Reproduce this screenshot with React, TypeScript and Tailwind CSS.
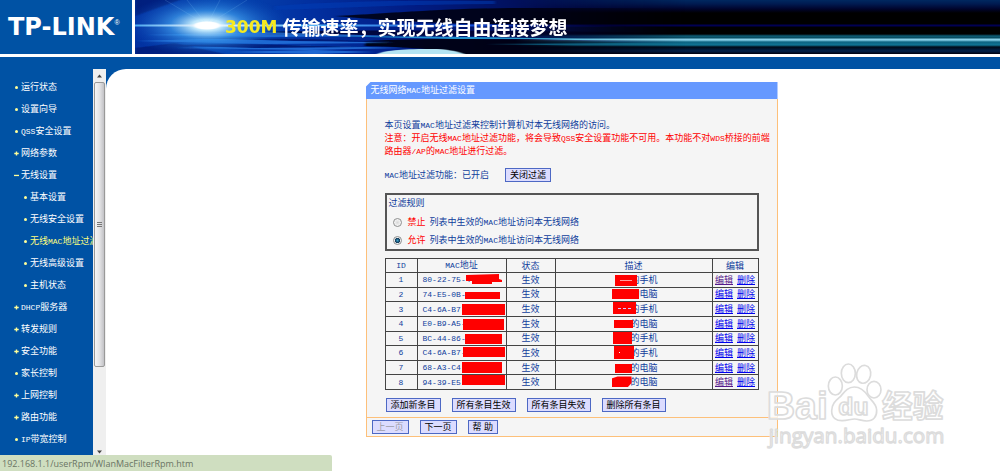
import React from "react";

const cjk =
  "font-['Liberation_Sans','Noto_Sans_CJK_SC',sans-serif] text-[9px] leading-[13px]";

/** Sets runs of Latin letters and digits in the half-width monospace face. */
function T({ children }: { children: string }) {
  const parts = children.split(/([A-Za-z0-9/\-]+)/);
  return (
    <>
      {parts.map((part, i) =>
        i % 2 === 1 ? (
          <span key={i} className="font-['Liberation_Mono',monospace] text-[8px]">
            {part}
          </span>
        ) : (
          part
        ),
      )}
    </>
  );
}

type Mark = "dot" | "plus" | "minus";

const navItems: { label: string; mark: Mark; sub?: boolean; active?: boolean }[] = [
  { label: "运行状态", mark: "dot" },
  { label: "设置向导", mark: "dot" },
  { label: "QSS安全设置", mark: "dot" },
  { label: "网络参数", mark: "plus" },
  { label: "无线设置", mark: "minus" },
  { label: "基本设置", mark: "dot", sub: true },
  { label: "无线安全设置", mark: "dot", sub: true },
  { label: "无线MAC地址过滤", mark: "dot", sub: true, active: true },
  { label: "无线高级设置", mark: "dot", sub: true },
  { label: "主机状态", mark: "dot", sub: true },
  { label: "DHCP服务器", mark: "plus" },
  { label: "转发规则", mark: "plus" },
  { label: "安全功能", mark: "plus" },
  { label: "家长控制", mark: "dot" },
  { label: "上网控制", mark: "plus" },
  { label: "路由功能", mark: "plus" },
  { label: "IP带宽控制", mark: "dot" },
];

function NavMark({ mark }: { mark: Mark }) {
  return (
    <svg viewBox="0 0 5 5" className="size-[5px] shrink-0" fill="#ffff99" aria-hidden="true">
      {mark === "dot" && <circle cx="2.5" cy="2.5" r="1.5" />}
      {mark === "plus" && <path d="M1.8 0.5h1.4v1.3h1.5v1.4h-1.5v1.3h-1.4v-1.3h-1.5v-1.4h1.5z" />}
      {mark === "minus" && <rect x="0" y="1.8" width="5" height="1.3" />}
    </svg>
  );
}

function Header() {
  return (
    <header className="flex h-[54px] shrink-0 gap-[3px] bg-white">
      <div className="flex w-[132px] shrink-0 bg-[#0052a4] pl-[8px] text-white">
        <span className="pt-[15px] font-['DejaVu_Sans',sans-serif] text-[24px] leading-[25px] font-bold">TP-LINK</span>
        <span className="pt-[19px] font-['Liberation_Sans',sans-serif] text-[7px] leading-none">®</span>
      </div>
      <div className="relative flex min-w-0 flex-1 items-center overflow-hidden bg-[linear-gradient(180deg,#002860_0px,#001a50_4px,#00042c_9px,#000_13px,#000_24px,#000052_25px,#000052_26px,#000_27px,#000_34px,#0d5e78_36px,#07485c_38px,#86cfe8_39px,#86cfe8_40px,#0d6482_42px,#0f7494_45px,#000a18_47px,#00204a_51px,#00000c_54px)]">
        <Flare />
        <div className="relative flex items-center gap-[5px] pl-[90px] whitespace-nowrap">
          <span className="font-['DejaVu_Sans',sans-serif] text-[17px] leading-[54px] font-bold text-[#f6ea1e]">300M</span>
          <span className="font-['Noto_Sans_CJK_SC',sans-serif] text-[19px] leading-[54px] font-bold text-white">
            传输速率，实现无线自由连接梦想
          </span>
        </div>
      </div>
    </header>
  );
}

function Flare() {
  return (
    <svg
      viewBox="0 0 865 54"
      className="absolute top-0 left-0 h-[54px] w-[865px] [mask-image:linear-gradient(90deg,#000_380px,transparent_550px)]"
      aria-hidden="true"
    >
      <defs>
        <linearGradient id="base" x1="0" x2="1" y1="0" y2="0">
          <stop offset="0" stopColor="#0230a0" />
          <stop offset="0.1" stopColor="#0546b0" />
          <stop offset="0.2" stopColor="#0230a0" />
          <stop offset="0.32" stopColor="#011c84" />
          <stop offset="0.48" stopColor="#010c50" />
          <stop offset="0.62" stopColor="#000430" />
        </linearGradient>
        <radialGradient id="halo">
          <stop offset="0" stopColor="#fff" />
          <stop offset="0.18" stopColor="#c8efff" stopOpacity="0.95" />
          <stop offset="0.45" stopColor="#3f9cec" stopOpacity="0.7" />
          <stop offset="1" stopColor="#0848b8" stopOpacity="0" />
        </radialGradient>
        <linearGradient id="ray" x1="0" x2="1" y1="0" y2="0">
          <stop offset="0" stopColor="#4aa8f0" />
          <stop offset="0.15" stopColor="#fff" />
          <stop offset="0.35" stopColor="#58b8f8" />
          <stop offset="0.7" stopColor="#1450d8" />
          <stop offset="1" stopColor="#000070" stopOpacity="0" />
        </linearGradient>
        <linearGradient id="teal" x1="0" x2="1" y1="0" y2="0">
          <stop offset="0" stopColor="#2c9cd0" stopOpacity="0" />
          <stop offset="0.5" stopColor="#48b4d8" />
          <stop offset="1" stopColor="#7cc8e0" />
        </linearGradient>
        <filter id="soft" x="-20%" y="-50%" width="140%" height="200%">
          <feGaussianBlur stdDeviation="1.5 0.6" />
        </filter>
      </defs>
      <rect width="865" height="54" fill="url(#base)" />
      <g filter="url(#soft)">
        <path d="M0 0h45l-45 16zM0 54v-6l40-5 50 11z" fill="#001468" opacity="0.6" />
        <path d="M200 16c60-3 110-8 190-8h170v20l-200-4c-80-1-110-4-160-8z" fill="#00020e" opacity="0.85" />
        <path d="M130 32c80-2 200-2 430 1v4l-200-1-230-1z" fill="#00042c" opacity="0.8" />
        <path d="M230 41c70-3 130-2 220 0l110 4v9h-240c-20-6-60-7-90-8z" fill="#00020e" opacity="0.9" />
        <path d="M140 6c50-4 110-6 220-5v3c-80 0-150 4-220 6z" fill="#063cb8" opacity="0.5" />
        <path d="M10 35l120-3 130 4-130 1zM0 41l100-3 160 5-130 1zM40 48l110-3 120 3-100 2zM90 52l90-2 60 2-60 2z" fill="#2a7ce4" opacity="0.75" />
        <path d="M60 38l120 1 80 3-100-1zM20 45l90-1 120 3-110 1z" fill="#011c78" />
        <path d="M190 36l150 1 100 2-120 0z" fill="#218fcb" />
        <path d="M242 54c8-4 30-5 55-5 14 0 24 2 32 5z" fill="#b4e4f2" />
      </g>
      <path d="M300 37l150 1.500h110v2l-120-.5z" fill="url(#teal)" />
      <path d="M350 44l210-1.500v3l-120 0z" fill="#0f6688" opacity="0.8" />
      <ellipse cx="72" cy="25" rx="84" ry="32" fill="url(#halo)" />
      <path d="M72 25L30 0M72 25L52 0M72 25L85 0M72 25L112 0" stroke="#9cdcff" strokeWidth="0.6" opacity="0.25" />
      <rect y="24.500" width="480" height="2" fill="url(#ray)" />
      <ellipse cx="72" cy="25.500" rx="13" ry="4" fill="#fff" filter="url(#soft)" />
    </svg>
  );
}

function Sidebar() {
  return (
    <aside className="flex w-[106px] shrink-0">
      <nav className="min-w-0 flex-1 overflow-hidden pt-[7px]">
        <ul>
          {navItems.map((item) => (
            <li key={item.label} className={item.sub ? "pl-[23px]" : "pl-[14px]"}>
              <a
                href="#"
                className={`flex h-[22px] items-center gap-[2px] whitespace-nowrap ${item.active ? "text-[#ffff80]" : "text-white"}`}
              >
                <NavMark mark={item.mark} />
                <span>
                  <T>{item.label}</T>
                </span>
              </a>
            </li>
          ))}
        </ul>
      </nav>
      <div className="flex w-[13px] shrink-0 flex-col items-center bg-[#efefef] pb-[16px]" aria-hidden="true">
        <svg viewBox="0 0 13 13" className="size-[13px] shrink-0">
          <path d="M4 8.500L6.500 5.500L9 8.500z" fill="#444" />
        </svg>
        <div className="flex h-[285px] w-[11px] shrink-0 flex-col items-center justify-center gap-px rounded-[2px] border border-[#999] bg-[linear-gradient(90deg,#f6f6f6,#e4e4e6_50%,#c2c2c6)]">
          <span className="h-px w-[5px] bg-[#777]" />
          <span className="h-px w-[5px] bg-[#777]" />
          <span className="h-px w-[5px] bg-[#777]" />
        </div>
        <svg viewBox="0 0 13 6" className="mt-auto h-[6px] w-[13px] shrink-0">
          <path d="M4 1.500L6.500 4.500L9 1.500z" fill="#444" />
        </svg>
      </div>
    </aside>
  );
}

function Btn({ children, disabled }: { children: string; disabled?: boolean }) {
  return (
    <button
      type="button"
      disabled={disabled}
      className="flex h-[14px] items-center justify-center border border-[#4d68c4] bg-[#dcdcff] px-[4px] whitespace-nowrap text-black disabled:text-[#9c9ca8]"
    >
      {children}
    </button>
  );
}

const rows = [
  { mac: "80-22-75-4", name: "的手机", seen: true, m: "", d: "left-[59px] top-[2px] w-[22px] h-[11px]", trace: "line" },
  { mac: "74-E5-0B-", name: "的电脑", m: "left-[47px] top-[4px] w-[35px] h-[7px]", d: "left-[56px] top-[1px] w-[27px] h-[10px]" },
  { mac: "C4-6A-B7-", name: "的手机", m: "left-[44px] top-[2px] w-[43px] h-[11px]", d: "left-[57px] top-0 w-[23px] h-[12px]", trace: "dash" },
  { mac: "E0-B9-A5-", name: "的电脑", m: "left-[45px] top-[2px] w-[41px] h-[11px]", d: "left-[58px] top-[3px] w-[19px] h-[8px]" },
  { mac: "BC-44-86-", name: "的手机", m: "left-[47px] top-[2px] w-[37px] h-[10px]", d: "left-[57px] top-0 w-[19px] h-[12px]" },
  { mac: "C4-6A-B7-", name: "的手机", m: "left-[45px] top-[1px] w-[42px] h-[10px]", d: "left-[58px] top-0 w-[20px] h-[13px]", trace: "dot" },
  { mac: "68-A3-C4-", name: "的电脑", m: "left-[44px] top-[1px] w-[40px] h-[11px]", d: "left-[59px] top-[3px] w-[17px] h-[9px]" },
  { mac: "94-39-E5", name: "的电脑", seen: true, m: "left-[44px] top-0 w-[43px] h-[10px]", d: "left-[56px] top-[1px] w-[20px] h-[11px] [clip-path:polygon(0_20%,30%_0,100%_0,100%_60%,80%_100%,0_100%)]" },
];

const cell = "relative border border-[#444] p-0 font-normal leading-[12px]";

function FilterTable() {
  return (
    <table className="mt-[7px] h-[132px] w-full table-fixed border-collapse border border-[#444] text-center">
      <colgroup>
        <col className="w-[32px]" />
        <col className="w-[89px]" />
        <col className="w-[49px]" />
        <col />
        <col className="w-[46px]" />
      </colgroup>
      <thead>
        <tr>
          {["ID", "MAC地址", "状态", "描述", "编辑"].map((h) => (
            <th key={h} scope="col" className={cell}>
              <T>{h}</T>
            </th>
          ))}
        </tr>
      </thead>
      <tbody>
        {rows.map((r, i) => (
          <tr key={i}>
            <td className={cell}>
              <T>{String(i + 1)}</T>
            </td>
            <td className={`${cell} text-left`}>
              <span className="pl-[5px]">
                <T>{r.mac}</T>
              </span>
              {r.m ? (
                <span className={`absolute bg-[#ff0000] ${r.m}`} />
              ) : (
                <svg viewBox="0 0 36 11" className="absolute top-px left-[48px] h-[11px] w-[36px]" aria-hidden="true">
                  <path d="M0 1L33 0V5L36 6V8H26V10H6V7H0z" fill="#ff0000" />
                </svg>
              )}
            </td>
            <td className={cell}>生效</td>
            <td className={`${cell} text-right`}>
              <span className="pr-[54px]">{r.name}</span>
              <span className={`absolute flex items-center justify-center bg-[#ff0000] ${r.d}`}>
                {r.trace === "line" && <span className="h-px w-[12px] bg-[#ff9c9c]" />}
                {r.trace === "dash" && <span className="w-[13px] border-t border-dashed border-[#d8c8ff]" />}
                {r.trace === "dot" && <span className="-ml-[8px] size-px bg-white" />}
              </span>
            </td>
            <td className={cell}>
              <span className="flex justify-center gap-[4px] whitespace-nowrap">
                <a href="#" className={`underline ${r.seen ? "text-[#551a8b]" : "text-[#0000ee]"}`}>
                  编辑
                </a>
                <a href="#" className="text-[#0000ee] underline">
                  删除
                </a>
              </span>
            </td>
          </tr>
        ))}
      </tbody>
    </table>
  );
}

function Rule({ word, checked }: { word: string; checked?: boolean }) {
  return (
    <label className="flex h-[18px] items-center pl-[6px]">
      <input
        type="radio"
        name="rule"
        defaultChecked={checked}
        className="size-[9px] shrink-0 appearance-none rounded-full border border-[#8e8f8f] bg-[radial-gradient(circle,#d8d8d8_0,#f6f6f6_70%)] checked:bg-[radial-gradient(circle,#3aa0c8_0,#123c5c_45%,#f0f0f0_60%)]"
      />
      <span className="pl-[6px] text-[#ff0000]">{word}</span>
      <span className="pl-[4px]">
        <T>列表中生效的MAC地址访问本无线网络</T>
      </span>
    </label>
  );
}

function Panel() {
  return (
    <section className="w-[412px] shrink-0">
      <h1 className="flex h-[17px] items-center bg-[#6699ff] pl-[5px] font-normal text-white [clip-path:polygon(5px_0,100%_0,100%_100%,0_100%,0_5px)]">
        <span>
          <T>无线网络MAC地址过滤设置</T>
        </span>
      </h1>
      <div className="border border-t-0 border-[#fdc07a] bg-[#f5f5f5] text-[#0f3d9c]">
        <div className="px-[18px] pt-[20px] pb-[5px]">
          <p className="whitespace-nowrap">
            <T>本页设置MAC地址过滤来控制计算机对本无线网络的访问。</T>
          </p>
          <p className="whitespace-nowrap text-[#ff0000]">
            <T>注意：开启无线MAC地址过滤功能，将会导致QSS安全设置功能不可用。本功能不对WDS桥接的前端</T>
            <br />
            <T>路由器/AP的MAC地址进行过滤。</T>
          </p>
          <div className="mt-[10px] flex items-center gap-[16px]">
            <span>
              <T>MAC地址过滤功能：已开启</T>
            </span>
            <Btn>关闭过滤</Btn>
          </div>
          <fieldset className="mt-[11px] h-[58px] border-2 border-[#555]">
            <div className="pt-[2px] pl-[2px]">过滤规则</div>
            <div className="pt-[3px]">
              <Rule word="禁止" />
              <Rule word="允许" checked />
            </div>
          </fieldset>
          <FilterTable />
          <div className="mt-[8px] flex gap-[11px] pl-px">
            <Btn>添加新条目</Btn>
            <Btn>所有条目生效</Btn>
            <Btn>所有条目失效</Btn>
            <Btn>删除所有条目</Btn>
          </div>
        </div>
        <div className="flex gap-[11px] border-t border-[#fdc07a] px-[5px] py-[2px]">
          <Btn disabled>上一页</Btn>
          <Btn>下一页</Btn>
          <Btn>帮 助</Btn>
        </div>
      </div>
    </section>
  );
}

function Watermark() {
  return (
    <svg
      viewBox="0 0 720 363"
      className="pointer-events-none absolute right-0 bottom-0 h-[121px] w-[240px]"
      fill="#fff"
      fillOpacity="0.8"
      stroke="#dcdcdc"
      strokeWidth="5"
      strokeLinejoin="round"
      aria-hidden="true"
    >
      <ellipse cx="226" cy="108" rx="21" ry="27" />
      <ellipse cx="265" cy="70" rx="21" ry="28" />
      <ellipse cx="311" cy="73" rx="21" ry="27" transform="rotate(12 311 73)" />
      <ellipse cx="342" cy="119" rx="21" ry="25" />
      <path d="M283 111C262 111 252 128 240 141C226 153 215 162 215 183C215 204 230 213 248 212C264 211 272 207 284 207C296 207 304 213 320 213C340 213 351 200 350 180C349 160 334 153 325 139C315 124 304 111 283 111z" />
      <g className="font-['Liberation_Sans',sans-serif] font-bold">
        <text x="20" y="208" fontSize="118">Bai</text>
        <text x="235" y="195" fontSize="74">du</text>
      </g>
      <text x="366" y="201" fontSize="92" className="font-['Noto_Sans_CJK_SC',sans-serif] font-bold">经验</text>
      <text x="26" y="280" fontSize="62" strokeWidth="4" className="font-['Open_Sans',sans-serif]">jingyan.baidu.com</text>
    </svg>
  );
}

export default function App() {
  return (
    <div className={`relative flex h-screen flex-col overflow-hidden bg-white ${cjk}`}>
      <Header />
      <div className="mt-[3px] h-[12px] shrink-0 bg-[#0052a4]" />
      <div className="flex min-h-0 flex-1 bg-[#0052a4]">
        <Sidebar />
        <main className="flex min-w-0 flex-1 items-start justify-center rounded-tl-[20px] bg-white pt-[13px] pl-[37px]">
          <Panel />
        </main>
      </div>
      <Watermark />
      <div className="absolute bottom-0 left-0 flex h-[16px] w-[332px] items-center rounded-tr-[2px] bg-[#cfdec0] pl-[2px] font-['Open_Sans',sans-serif] text-[9px] text-[#6a7464]">
        192.168.1.1/userRpm/WlanMacFilterRpm.htm
      </div>
    </div>
  );
}
